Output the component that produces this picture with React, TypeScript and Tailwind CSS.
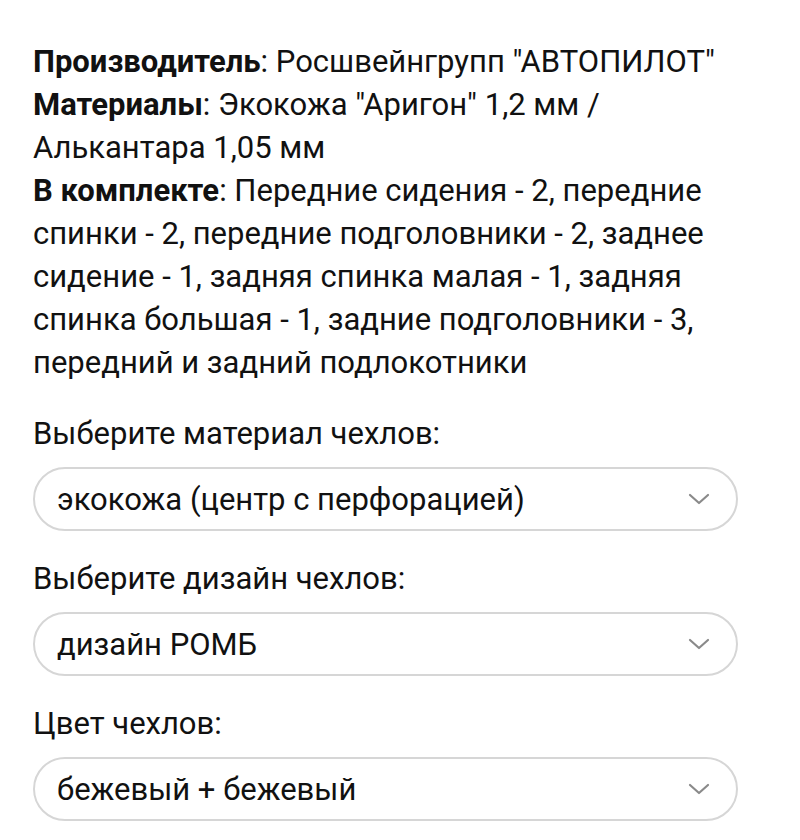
function Chevron() {
  return (
    <svg width="22" height="12" viewBox="0 0 22 12" fill="none" className="shrink-0">
      <path d="M2 2l9 8 9-8" stroke="#8a8a8a" strokeWidth="2.2" strokeLinecap="round" strokeLinejoin="round" />
    </svg>
  )
}

function Select({ value }: { value: string }) {
  return (
    <div className="flex h-16 w-[705px] items-center justify-between rounded-full border-2 border-[#d6d6d6] pl-[22px] pr-[26px]">
      <span>{value}</span>
      <Chevron />
    </div>
  )
}

export default function App() {
  return (
    <div className="min-h-screen bg-white pl-[33px] pt-[40px] text-[31px] leading-[43px] text-[#111] [font-family:Roboto,'Noto_Sans',sans-serif]">
      <p className="w-[760px]">
        <b className="font-bold">Производитель</b>: Росшвейнгрупп "АВТОПИЛОТ"
        <br />
        <b className="font-bold">Материалы</b>: Экокожа "Аригон" 1,2 мм /<br />
        Алькантара 1,05 мм
        <br />
        <b className="font-bold">В комплекте</b>: Передние сидения - 2, передние
        <br />
        спинки - 2, передние подголовники - 2, заднее
        <br />
        сидение - 1, задняя спинка малая - 1, задняя
        <br />
        спинка большая - 1, задние подголовники - 3,
        <br />
        передний и задний подлокотники
      </p>

      <div className="mt-[28px]">
        <p>Выберите материал чехлов:</p>
        <div className="mt-[12px]">
          <Select value="экокожа (центр с перфорацией)" />
        </div>
      </div>

      <div className="mt-[26px]">
        <p>Выберите дизайн чехлов:</p>
        <div className="mt-[12px]">
          <Select value="дизайн РОМБ" />
        </div>
      </div>

      <div className="mt-[26px]">
        <p>Цвет чехлов:</p>
        <div className="mt-[12px]">
          <Select value="бежевый + бежевый" />
        </div>
      </div>
    </div>
  )
}
